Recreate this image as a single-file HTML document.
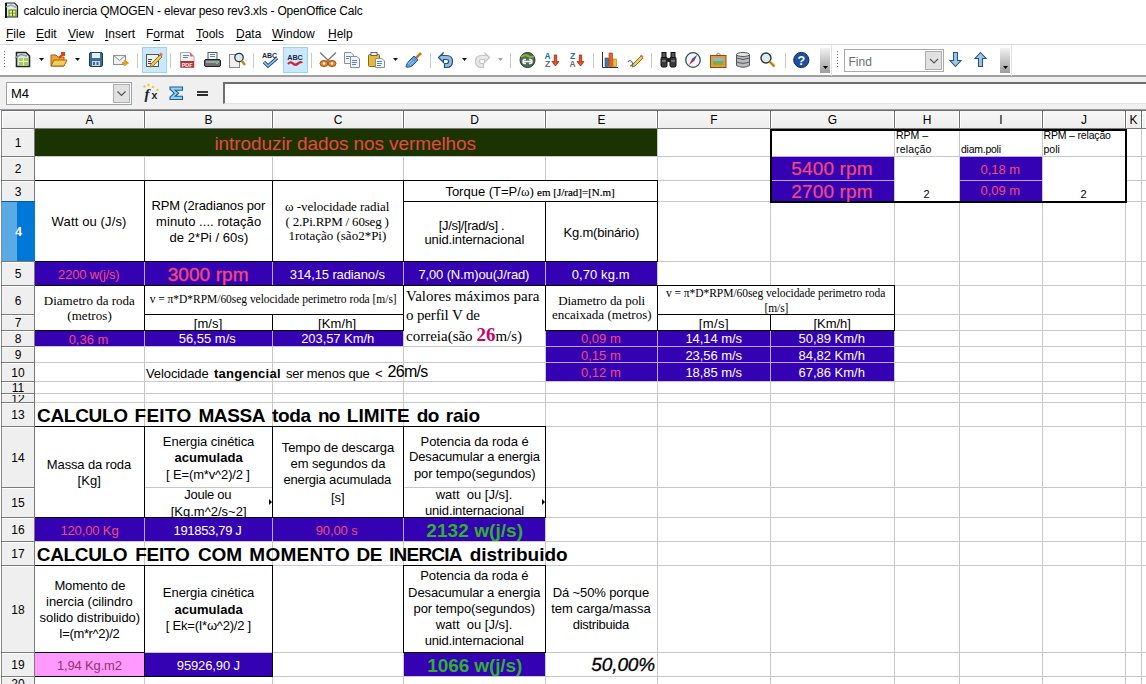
<!DOCTYPE html><html><head><meta charset="utf-8"><style>*{margin:0;padding:0;box-sizing:border-box}
html,body{width:1146px;height:684px;overflow:hidden;background:#fff;font-family:"Liberation Sans",sans-serif;color:#000;position:relative}
.a{position:absolute}
svg{position:absolute;overflow:visible}
#title{left:23.5px;top:4px;font-size:12px;line-height:14px;letter-spacing:-0.17px;white-space:nowrap}
.menu{position:absolute;top:27px;font-size:12px;line-height:14px;white-space:nowrap}
.menu u{text-decoration:underline;text-underline-offset:2px}
.sep{position:absolute;top:52px;width:1px;height:20px;background:#c8c8c8}
.dd{position:absolute;top:59px;width:0;height:0;border-left:3px solid transparent;border-right:3px solid transparent;border-top:3px solid #111}
.hl{position:absolute;background:#cce4f7;border:1px solid #99c9ef}
.gh{position:absolute;background:#c8c8c8}
.ch{position:absolute;top:111px;height:17px;background:linear-gradient(#f7f7f7,#ededed);border-left:1px solid #fff;border-right:1px solid #fff;font-size:12px;line-height:19px;text-align:center}
.rh{position:absolute;left:2px;width:32px;background:#efefef;font-size:12px;display:flex;align-items:center;justify-content:center;overflow:hidden;border-top:1px solid #fff}
.rh.sel{background:linear-gradient(90deg,#5aaae8 0,#5aaae8 15px,#0078d7 15px);color:#fff;font-weight:bold;border-top:1px solid #0a5a94}
.c{position:absolute;display:flex;align-items:center;justify-content:center;text-align:center;overflow:hidden;font-size:13px;line-height:15px;white-space:nowrap}
.pu{background:#3300a0}
.red{color:#ff3366}
.wh{color:#fff}
.ser{font-family:"Liberation Serif",serif}
</style></head><body>
<svg style="left:5px;top:2px" width="14" height="16" viewBox="0 0 14 16">
<path d="M1 1H9.5L12.5 4V15H1Z" fill="#e4ecea" stroke="#1a2424" stroke-width="1.2"/>
<rect x="0" y="1" width="2" height="15" fill="#101818"/>
<rect x="3.5" y="7.5" width="8" height="7" fill="#587a1a"/>
<rect x="4.5" y="8.5" width="2.5" height="2.3" fill="#e4f47a"/><rect x="8" y="8.5" width="2.5" height="2.3" fill="#e4f47a"/>
<rect x="4.5" y="11.5" width="2.5" height="2.3" fill="#e4f47a"/><rect x="8" y="11.5" width="2.5" height="2.3" fill="#e4f47a"/>
<path d="M1 5L6 3L11.5 5.5" stroke="#9aa8a8" stroke-width="1.6" fill="none"/>
</svg>
<div id="title" class="a">calculo inercia QMOGEN - elevar peso rev3.xls - OpenOffice Calc</div>
<div class="menu" style="left:6px"><u>F</u>ile</div>
<div class="menu" style="left:36px"><u>E</u>dit</div>
<div class="menu" style="left:68px"><u>V</u>iew</div>
<div class="menu" style="left:105px"><u>I</u>nsert</div>
<div class="menu" style="left:146px">F<u>o</u>rmat</div>
<div class="menu" style="left:196px"><u>T</u>ools</div>
<div class="menu" style="left:236px"><u>D</u>ata</div>
<div class="menu" style="left:272px"><u>W</u>indow</div>
<div class="menu" style="left:328px"><u>H</u>elp</div>
<div class="a" style="left:0;top:44px;width:1146px;height:1px;background:#dadada"></div>
<div class="a" style="left:0;top:75px;width:1146px;height:2px;background:#a0a0a0"></div>
<div class="a" style="left:0;top:77px;width:1146px;height:33px;background:#f0f0f0"></div>
<div class="a" style="left:6px;top:82px;width:126px;height:23px;background:#fff;border:1px solid #a0a0a0"></div>
<div class="a" style="left:11px;top:86px;font-size:13px;line-height:15px">M4</div>
<div class="a" style="left:113px;top:84px;width:17px;height:19px;background:#e1e1e1;border:1px solid #adadad"></div>
<svg style="left:116px;top:90px" width="11" height="7"><path d="M1.5 1.5l4 4 4-4" stroke="#555" fill="none" stroke-width="1.2"/></svg>
<div class="a" style="left:223px;top:82px;width:923px;height:22px;background:#fff;border-top:2px solid #6e6e6e;border-left:2px solid #6e6e6e;border-bottom:1px solid #e3e3e3"></div>
<div class="a" style="left:0;top:109px;width:1146px;height:1px;background:#9a9a9a"></div>
<div class="a" style="left:1px;top:110px;width:1145px;height:1px;background:#6f6f6f"></div>
<div class="a" style="left:1px;top:110px;width:1px;height:574px;background:#8a8a8a"></div>

<div class="a" style="left:4px;top:51px;width:1px;height:1px;background:#777"></div>
<div class="a" style="left:4px;top:54px;width:1px;height:1px;background:#777"></div>
<div class="a" style="left:4px;top:57px;width:1px;height:1px;background:#777"></div>
<div class="a" style="left:4px;top:60px;width:1px;height:1px;background:#777"></div>
<div class="a" style="left:4px;top:63px;width:1px;height:1px;background:#777"></div>
<div class="a" style="left:4px;top:66px;width:1px;height:1px;background:#777"></div>
<svg style="left:15px;top:51px" width="16" height="17" viewBox="0 0 16 17"><path d="M1.5 1.5H11L14.5 5V15.5H1.5Z" fill="#dfe6e6" stroke="#1c2828" stroke-width="1.6"/><rect x="4" y="7" width="9" height="7.5" fill="#a8cc58"/><path d="M4 10.5H13M8.5 7V14.5" stroke="#eaf4d0" stroke-width="1"/><path d="M0 7L6 3.5L12 5" stroke="#8a9a9a" stroke-width="1.6" fill="none"/></svg>
<svg style="left:39px;top:58px" width="6" height="3" viewBox="0 0 6 3"><path d="M0 0H5L2.5 3Z" fill="#111"/></svg>
<svg style="left:50px;top:51px" width="18" height="17" viewBox="0 0 18 17"><path d="M1 4H6L8 6H14V15H1Z" fill="#e8a53a" stroke="#a06010" stroke-width="1"/><path d="M1 15L4 9H17L14 15Z" fill="#f7cc5a" stroke="#a06010" stroke-width="1"/><path d="M9 7L14 2M11 2H14V5" stroke="#e04020" stroke-width="2.2" fill="none"/></svg>
<svg style="left:75px;top:58px" width="6" height="3" viewBox="0 0 6 3"><path d="M0 0H5L2.5 3Z" fill="#111"/></svg>
<svg style="left:89px;top:52px" width="15" height="15" viewBox="0 0 15 15"><rect x="0.5" y="0.5" width="13" height="14" rx="1.5" fill="#3c6e94" stroke="#1f3a52"/><rect x="3" y="1" width="8" height="5" fill="#e6eef5"/><rect x="3" y="9" width="8" height="5" fill="#c8d6e2"/><rect x="4" y="10" width="2" height="3" fill="#3c6e94"/><rect x="7.5" y="10" width="2" height="3" fill="#3c6e94"/></svg>
<svg style="left:113px;top:55px" width="17" height="12" viewBox="0 0 17 12"><rect x="0.5" y="0.5" width="12" height="9" fill="#eef0f2" stroke="#8a9098"/><path d="M0.5 0.5L6.5 5.5L12.5 0.5" stroke="#8a9098" fill="none"/><path d="M9 8H13M11 5.5L14.5 8L11 10.5" stroke="#e89a20" stroke-width="2" fill="none"/></svg>
<div class="a" style="left:137px;top:53px;width:1px;height:15px;background:#c9c9c9"></div>
<div class="a" style="left:142px;top:47px;width:25px;height:26px;background:#cce8ff;border:1px solid #99d1ff"></div>
<svg style="left:146px;top:52px" width="17" height="15" viewBox="0 0 17 15"><rect x="0.5" y="2.5" width="12" height="12" fill="#eef0f0" stroke="#555"/><path d="M2 7.5H6M2 9.5H5M2 11.5H5" stroke="#444"/><path d="M5 12L14 3L16 5L7 14L4 15Z" fill="#f5c842" stroke="#7a5a10" stroke-width="0.8"/><path d="M13 2L15 0.5L17 2.5L15.5 4.5Z" fill="#e07080"/></svg>
<div class="a" style="left:170px;top:53px;width:1px;height:15px;background:#c9c9c9"></div>
<svg style="left:180px;top:52px" width="15" height="16" viewBox="0 0 15 16"><path d="M0.5 0.5H10L14 4.5V15.5H0.5Z" fill="#f4f4f4" stroke="#aaa"/><path d="M3 3.5H9M3 5.5H8" stroke="#5588bb"/><path d="M10 0.5V4.5H14" fill="#e06060"/><rect x="0.5" y="9" width="13.5" height="6.5" fill="#c42a2a"/><text x="7.2" y="14.5" font-size="5.5" font-family="Liberation Sans" font-weight="bold" fill="#fff" text-anchor="middle">PDF</text></svg>
<svg style="left:204px;top:52px" width="17" height="15" viewBox="0 0 17 15"><rect x="4" y="0.5" width="9" height="7" fill="#f4f6f8" stroke="#557"/><path d="M6 2.5H11M6 4.5H11" stroke="#5588bb"/><rect x="0.5" y="7.5" width="16" height="7" rx="1.5" fill="#6e7070" stroke="#222"/><rect x="2" y="9" width="13" height="2" fill="#9aa"/><rect x="12" y="11" width="2" height="1" fill="#7c4"/></svg>
<svg style="left:229px;top:52px" width="17" height="16" viewBox="0 0 17 16"><rect x="0.5" y="2.5" width="10" height="13" fill="#eef0f2" stroke="#888"/><circle cx="10" cy="5.5" r="4.2" fill="#d8ecf8" stroke="#333" stroke-width="1.3"/><path d="M12.5 8.5L16 13" stroke="#b88a20" stroke-width="2.4"/></svg>
<div class="a" style="left:253px;top:53px;width:1px;height:15px;background:#c9c9c9"></div>
<svg style="left:261px;top:52px" width="18" height="16" viewBox="0 0 18 16"><text x="8.5" y="6" font-size="7" font-family="Liberation Sans" font-weight="bold" fill="#1a2a40" text-anchor="middle">ABC</text><path d="M3 10L7 14L16 6" stroke="#1a4a80" stroke-width="3.4" fill="none"/><path d="M3 10L7 14L16 6" stroke="#8cc8f0" stroke-width="1.6" fill="none"/></svg>
<div class="a" style="left:283px;top:47px;width:25px;height:26px;background:#cce8ff;border:1px solid #99d1ff"></div>
<svg style="left:287px;top:53px" width="16" height="14" viewBox="0 0 16 14"><text x="8" y="6.5" font-size="7.2" font-family="Liberation Sans" font-weight="bold" fill="#1a2a40" text-anchor="middle">ABC</text><path d="M1 11Q4 8 6 10.5T11 10.5T15 10" stroke="#cc2a2a" stroke-width="2.4" fill="none"/></svg>
<div class="a" style="left:311px;top:53px;width:1px;height:15px;background:#c9c9c9"></div>
<svg style="left:319px;top:52px" width="18" height="15" viewBox="0 0 18 15"><path d="M1 0.5L11 10M17 0.5L7 10" stroke="#7a7a7a" stroke-width="1.3"/><ellipse cx="5" cy="11.5" rx="4" ry="3" fill="#e8852a" stroke="#a04a10"/><ellipse cx="13" cy="11.5" rx="4" ry="3" fill="#e8852a" stroke="#a04a10"/><circle cx="5" cy="11.5" r="1.2" fill="#fff"/><circle cx="13" cy="11.5" r="1.2" fill="#fff"/></svg>
<svg style="left:344px;top:52px" width="17" height="16" viewBox="0 0 17 16"><path d="M0.5 0.5H7L9.5 3V11.5H0.5Z" fill="#f2f4f6" stroke="#8a8f96"/><path d="M2 4.5H7M2 6.5H5" stroke="#5588bb"/><path d="M6.5 4.5H13L15.5 7V15.5H6.5Z" fill="#f2f4f6" stroke="#8a8f96"/><path d="M8 8.5H13M8 10.5H13M8 12.5H12" stroke="#5588bb"/></svg>
<svg style="left:368px;top:52px" width="18" height="16" viewBox="0 0 18 16"><rect x="0.5" y="2.5" width="11" height="12" rx="1" fill="#e8b83a" stroke="#8a6a10"/><rect x="3" y="0.5" width="6" height="3" fill="#f4f4f4" stroke="#666"/><path d="M7.5 6.5H14L16.5 9V15.5H7.5Z" fill="#f2f4f6" stroke="#8a8f96"/><path d="M9 9.5H14M9 11.5H14M9 13.5H13" stroke="#5588bb"/></svg>
<svg style="left:393px;top:58px" width="6" height="3" viewBox="0 0 6 3"><path d="M0 0H5L2.5 3Z" fill="#111"/></svg>
<svg style="left:405px;top:52px" width="18" height="16" viewBox="0 0 18 16"><path d="M11 6L16 1" stroke="#c0801a" stroke-width="2.5"/><path d="M9 4L13 8L7 14Q3 16 1 15Q1 12 4 9Z" fill="#5d9be0" stroke="#2a5a90" stroke-width="1"/><path d="M3 12L7 8M5 13L9 9" stroke="#b8d8f8" stroke-width="0.8"/></svg>
<div class="a" style="left:430px;top:53px;width:1px;height:15px;background:#c9c9c9"></div>
<svg style="left:437px;top:52px" width="18" height="16" viewBox="0 0 18 16"><path d="M4 3H9Q15 3 15 9Q15 15 9 15H7V11H9Q11 11 11 9Q11 7 9 7H6V10L1 5L6 0Z" fill="#8fbde8" stroke="#2c4e78" stroke-width="1.2" transform="translate(0.5,0.5)"/></svg>
<svg style="left:462px;top:58px" width="6" height="3" viewBox="0 0 6 3"><path d="M0 0H5L2.5 3Z" fill="#111"/></svg>
<svg style="left:474px;top:52px" width="17" height="16" viewBox="0 0 17 16"><path d="M12 3H7Q1 3 1 9Q1 15 7 15H9V11H7Q5 11 5 9Q5 7 7 7H10V10L15 5L10 0Z" fill="#e8e8e8" stroke="#c4c4c4" stroke-width="1.2" transform="translate(0.5,0.5)"/></svg>
<svg style="left:498px;top:58px" width="6" height="3" viewBox="0 0 6 3"><path d="M0 0H5L2.5 3Z" fill="#a8a8a8"/></svg>
<div class="a" style="left:510px;top:53px;width:1px;height:15px;background:#c9c9c9"></div>
<svg style="left:519px;top:52px" width="17" height="16" viewBox="0 0 17 16"><circle cx="8.5" cy="8" r="7.5" fill="#4a7050" stroke="#203830"/><path d="M2 5Q6 2 9 4T15 4" stroke="#8ab040" stroke-width="2" fill="none"/><path d="M4 9.5H13M4 9.5Q4 7.5 6 7.5H7M4 9.5Q4 11.5 6 11.5H7M13 9.5Q13 7.5 11 7.5H10M13 9.5Q13 11.5 11 11.5H10" stroke="#fff" stroke-width="1.4" fill="none"/></svg>
<svg style="left:544px;top:52px" width="16" height="16" viewBox="0 0 16 16"><text x="3.5" y="6.5" font-size="8.5" font-family="Liberation Sans" font-weight="bold" fill="#1a6ab8" text-anchor="middle">A</text><text x="3.5" y="15" font-size="8.5" font-family="Liberation Sans" font-weight="bold" fill="#6a6a6a" text-anchor="middle">Z</text><path d="M10.3 3H12.7V9.5H15L11.5 14L8 9.5H10.3Z" fill="#e8502a" stroke="#a02a10" stroke-width="0.8"/></svg>
<svg style="left:569px;top:52px" width="16" height="16" viewBox="0 0 16 16"><text x="3.5" y="6.5" font-size="8.5" font-family="Liberation Sans" font-weight="bold" fill="#1a6ab8" text-anchor="middle">Z</text><text x="3.5" y="15" font-size="8.5" font-family="Liberation Sans" font-weight="bold" fill="#6a6a6a" text-anchor="middle">A</text><path d="M10.3 3H12.7V9.5H15L11.5 14L8 9.5H10.3Z" fill="#e8502a" stroke="#a02a10" stroke-width="0.8"/></svg>
<div class="a" style="left:593px;top:53px;width:1px;height:15px;background:#c9c9c9"></div>
<svg style="left:602px;top:52px" width="17" height="16" viewBox="0 0 17 16"><path d="M0.5 0V15.5H16" stroke="#333" fill="none"/><rect x="3" y="6" width="3.5" height="8.5" fill="#4a78a8" stroke="#2a4a70" stroke-width="0.6"/><rect x="7" y="1" width="3.5" height="13.5" fill="#e8602a" stroke="#a03a10" stroke-width="0.6"/><rect x="11" y="7" width="3.5" height="7.5" fill="#f4c040" stroke="#a07a10" stroke-width="0.6"/></svg>
<svg style="left:627px;top:54px" width="17" height="13" viewBox="0 0 17 13"><path d="M1 8Q3 5 5 8T3 12Q6 11 7 9" stroke="#3a6ad0" stroke-width="1.2" fill="none"/><path d="M6 10L14 2L16 4L8 12L5 13Z" fill="#f5c842" stroke="#7a5a10" stroke-width="0.8"/><path d="M13 1.5L14.5 0.5L16.5 2.5L15.5 4Z" fill="#e07080"/></svg>
<div class="a" style="left:651px;top:53px;width:1px;height:15px;background:#c9c9c9"></div>
<svg style="left:660px;top:52px" width="17" height="15" viewBox="0 0 17 15"><rect x="1" y="5" width="6" height="10" rx="1.5" fill="#3a3a3a" stroke="#111"/><rect x="10" y="5" width="6" height="10" rx="1.5" fill="#3a3a3a" stroke="#111"/><rect x="2" y="0.5" width="4" height="5" fill="#555" stroke="#111"/><rect x="11" y="0.5" width="4" height="5" fill="#555" stroke="#111"/><rect x="6" y="6" width="5" height="4" fill="#222"/><path d="M2 9H6M11 9H15" stroke="#aaa"/></svg>
<svg style="left:685px;top:52px" width="16" height="16" viewBox="0 0 16 16"><circle cx="8" cy="8" r="7.3" fill="#f4f6f8" stroke="#3a4a5a" stroke-width="1.3"/><path d="M12 3L9 9L4 13L7 7Z" fill="#d82a2a"/><path d="M12 3L9 9L7 7Z" fill="#2a5ad8"/></svg>
<svg style="left:710px;top:52px" width="17" height="16" viewBox="0 0 17 16"><path d="M6 3.5L8.5 0.8L11 3.5" stroke="#666" fill="none" stroke-width="0.8"/><rect x="0.5" y="3.5" width="15.5" height="12" fill="#e89a3a" stroke="#8a5010"/><rect x="3" y="6" width="10.5" height="7" fill="#7ab040"/><rect x="3" y="6" width="10.5" height="3" fill="#88b8e0"/></svg>
<svg style="left:736px;top:52px" width="14" height="16" viewBox="0 0 14 16"><path d="M0.5 2.5V13.5Q7 17 13.5 13.5V2.5" fill="#b8bcc0" stroke="#555"/><ellipse cx="7" cy="2.5" rx="6.5" ry="2" fill="#e4e6e8" stroke="#555"/><path d="M0.5 6Q7 9 13.5 6M0.5 9.8Q7 12.8 13.5 9.8" stroke="#555" fill="none"/></svg>
<svg style="left:760px;top:52px" width="16" height="16" viewBox="0 0 16 16"><circle cx="6" cy="6" r="5" fill="#d8ecf8" stroke="#333" stroke-width="1.4"/><path d="M9.5 9.5L14.5 14.5" stroke="#c8a030" stroke-width="2.8"/><path d="M9.5 9.5L14.5 14.5" stroke="#6a5010" stroke-width="0.6"/></svg>
<div class="a" style="left:785px;top:53px;width:1px;height:15px;background:#c9c9c9"></div>
<svg style="left:793px;top:52px" width="17" height="16" viewBox="0 0 17 16"><circle cx="8.3" cy="8" r="7.6" fill="#1f4fa0" stroke="#0e2a5c"/><text x="8.3" y="12.8" font-size="12.5" font-family="Liberation Sans" font-weight="bold" fill="#fff" text-anchor="middle">?</text></svg>
<div class="a" style="left:820px;top:48px;width:10px;height:25px;background:linear-gradient(#f2f2f2,#9c9c9c)"></div>
<svg style="left:823px;top:66px" width="5" height="3" viewBox="0 0 5 3"><path d="M0 0H5L2.5 3Z" fill="#000"/></svg>
<div class="a" style="left:831px;top:44px;width:1px;height:32px;background:#e2e2e2"></div>
<div class="a" style="left:837px;top:51px;width:1px;height:1px;background:#777"></div>
<div class="a" style="left:837px;top:54px;width:1px;height:1px;background:#777"></div>
<div class="a" style="left:837px;top:57px;width:1px;height:1px;background:#777"></div>
<div class="a" style="left:837px;top:60px;width:1px;height:1px;background:#777"></div>
<div class="a" style="left:837px;top:63px;width:1px;height:1px;background:#777"></div>
<div class="a" style="left:837px;top:66px;width:1px;height:1px;background:#777"></div>
<div class="a" style="left:844px;top:49px;width:100px;height:23px;background:#fff;border:1px solid #a8a8a8"></div>
<div class="a" style="left:848.5px;top:55px;font-size:12px;line-height:14px;color:#6d6d6d">Find</div>
<div class="a" style="left:925px;top:51px;width:17px;height:19px;background:#e1e1e1;border:1px solid #adadad"></div>
<svg style="left:929px;top:58px" width="10" height="6" viewBox="0 0 10 6"><path d="M1 1L5 5L9 1" stroke="#555" fill="none" stroke-width="1.1"/></svg>
<svg style="left:949px;top:52px" width="13" height="15" viewBox="0 0 13 15"><path d="M4.5 0.5H8.5V8.5H12L6.5 14.5L1 8.5H4.5Z" fill="#9cc8ec" stroke="#2c5080" stroke-width="1.1"/></svg>
<svg style="left:974px;top:52px" width="13" height="15" viewBox="0 0 13 15"><path d="M4.5 14.5H8.5V6.5H12L6.5 0.5L1 6.5H4.5Z" fill="#9cc8ec" stroke="#2c5080" stroke-width="1.1"/></svg>
<div class="a" style="left:1000px;top:48px;width:10px;height:25px;background:linear-gradient(#f2f2f2,#9c9c9c)"></div>
<svg style="left:1003px;top:66px" width="5" height="3" viewBox="0 0 5 3"><path d="M0 0H5L2.5 3Z" fill="#000"/></svg>
<div class="a" style="left:1011px;top:44px;width:1px;height:32px;background:#e2e2e2"></div>
<svg style="left:142px;top:83px" width="20" height="19" viewBox="0 0 20 19"><text x="2.5" y="15.5" font-size="15" font-family="Liberation Serif" font-style="italic" font-weight="bold" fill="#1a2430">f</text><text x="9.5" y="15.5" font-size="10.5" font-family="Liberation Sans" font-weight="bold" fill="#1a2430">x</text><path d="M2.5 2L4 3.5L2.5 5L1 3.5Z M6.5 0.5L8 2L6.5 3.5L5 2Z M11 2.5L12.5 4L11 5.5L9.5 4Z M15.5 5.5L17 7L15.5 8.5L14 7Z" fill="#f4c430"/></svg>
<svg style="left:169px;top:86px" width="15" height="15" viewBox="0 0 15 15"><path d="M1 1H13.5V4.2H6.2L9.6 7.2L6.2 10.3H13.5V13.5H1V11.2L5.2 7.2L1 3.2Z" fill="#8fd2f6" stroke="#1f5a9a" stroke-width="1.1" stroke-linejoin="miter"/></svg>
<div class="a" style="left:197px;top:91px;width:11px;height:2px;background:#3a3a3a"></div>
<div class="a" style="left:197px;top:94px;width:11px;height:2px;background:#2a2a2a"></div>
<div class="ch" style="left:35px;width:109px">A</div>
<div class="ch" style="left:145px;width:127px">B</div>
<div class="ch" style="left:273px;width:130px">C</div>
<div class="ch" style="left:404px;width:141px">D</div>
<div class="ch" style="left:546px;width:111px">E</div>
<div class="ch" style="left:658px;width:112px">F</div>
<div class="ch" style="left:771px;width:123px">G</div>
<div class="ch" style="left:895px;width:64px">H</div>
<div class="ch" style="left:960px;width:82px">I</div>
<div class="ch" style="left:1043px;width:82px">J</div>
<div class="ch" style="left:1126px;width:15px">K</div>
<div class="ch" style="left:1142px;width:4px"></div>
<div class="rh" style="top:129px;height:27px"><span>1</span></div>
<div class="rh" style="top:157px;height:23px"><span>2</span></div>
<div class="rh" style="top:181px;height:20px"><span>3</span></div>
<div class="rh sel" style="top:202px;height:59px"><span>4</span></div>
<div class="rh" style="top:262px;height:23px"><span>5</span></div>
<div class="rh" style="top:286px;height:28px"><span>6</span></div>
<div class="rh" style="top:315px;height:15px"><span>7</span></div>
<div class="rh" style="top:331px;height:15px"><span>8</span></div>
<div class="rh" style="top:347px;height:15px"><span>9</span></div>
<div class="rh" style="top:363px;height:18px"><span>10</span></div>
<div class="rh" style="top:382px;height:11px"><span>11</span></div>
<div class="rh" style="top:394px;height:8px"><span>12</span></div>
<div class="rh" style="top:403px;height:23px"><span>13</span></div>
<div class="rh" style="top:427px;height:60px"><span>14</span></div>
<div class="rh" style="top:488px;height:29px"><span>15</span></div>
<div class="rh" style="top:518px;height:23px"><span>16</span></div>
<div class="rh" style="top:542px;height:23px"><span>17</span></div>
<div class="rh" style="top:566px;height:86px"><span>18</span></div>
<div class="rh" style="top:653px;height:23px"><span>19</span></div>
<div class="rh" style="top:677px;height:13px"><span>20</span></div>
<div class="a" style="left:34px;top:110px;width:1px;height:574px;background:#7a7a7a"></div>
<div class="a" style="left:144px;top:110px;width:1px;height:18px;background:#6f6f6f"></div>
<div class="a" style="left:272px;top:110px;width:1px;height:18px;background:#6f6f6f"></div>
<div class="a" style="left:403px;top:110px;width:1px;height:18px;background:#6f6f6f"></div>
<div class="a" style="left:545px;top:110px;width:1px;height:18px;background:#6f6f6f"></div>
<div class="a" style="left:657px;top:110px;width:1px;height:18px;background:#6f6f6f"></div>
<div class="a" style="left:770px;top:110px;width:1px;height:18px;background:#6f6f6f"></div>
<div class="a" style="left:894px;top:110px;width:1px;height:18px;background:#6f6f6f"></div>
<div class="a" style="left:959px;top:110px;width:1px;height:18px;background:#6f6f6f"></div>
<div class="a" style="left:1042px;top:110px;width:1px;height:18px;background:#6f6f6f"></div>
<div class="a" style="left:1125px;top:110px;width:1px;height:18px;background:#6f6f6f"></div>
<div class="a" style="left:1141px;top:110px;width:1px;height:18px;background:#6f6f6f"></div>
<div class="a" style="left:1px;top:128px;width:1145px;height:1px;background:#7a7a7a"></div>
<div class="a" style="left:1px;top:156px;width:34px;height:1px;background:#7a7a7a"></div>
<div class="a" style="left:1px;top:180px;width:34px;height:1px;background:#7a7a7a"></div>
<div class="a" style="left:1px;top:201px;width:34px;height:1px;background:#7a7a7a"></div>
<div class="a" style="left:1px;top:261px;width:34px;height:1px;background:#7a7a7a"></div>
<div class="a" style="left:1px;top:285px;width:34px;height:1px;background:#7a7a7a"></div>
<div class="a" style="left:1px;top:314px;width:34px;height:1px;background:#7a7a7a"></div>
<div class="a" style="left:1px;top:330px;width:34px;height:1px;background:#7a7a7a"></div>
<div class="a" style="left:1px;top:346px;width:34px;height:1px;background:#7a7a7a"></div>
<div class="a" style="left:1px;top:362px;width:34px;height:1px;background:#7a7a7a"></div>
<div class="a" style="left:1px;top:381px;width:34px;height:1px;background:#7a7a7a"></div>
<div class="a" style="left:1px;top:393px;width:34px;height:1px;background:#7a7a7a"></div>
<div class="a" style="left:1px;top:402px;width:34px;height:1px;background:#7a7a7a"></div>
<div class="a" style="left:1px;top:426px;width:34px;height:1px;background:#7a7a7a"></div>
<div class="a" style="left:1px;top:487px;width:34px;height:1px;background:#7a7a7a"></div>
<div class="a" style="left:1px;top:517px;width:34px;height:1px;background:#7a7a7a"></div>
<div class="a" style="left:1px;top:541px;width:34px;height:1px;background:#7a7a7a"></div>
<div class="a" style="left:1px;top:565px;width:34px;height:1px;background:#7a7a7a"></div>
<div class="a" style="left:1px;top:652px;width:34px;height:1px;background:#7a7a7a"></div>
<div class="a" style="left:1px;top:676px;width:34px;height:1px;background:#7a7a7a"></div>
<div class="gh" style="left:144px;top:129px;width:1px;height:555px"></div>
<div class="gh" style="left:272px;top:129px;width:1px;height:555px"></div>
<div class="gh" style="left:403px;top:129px;width:1px;height:555px"></div>
<div class="gh" style="left:545px;top:129px;width:1px;height:555px"></div>
<div class="gh" style="left:657px;top:129px;width:1px;height:555px"></div>
<div class="gh" style="left:770px;top:129px;width:1px;height:555px"></div>
<div class="gh" style="left:894px;top:129px;width:1px;height:555px"></div>
<div class="gh" style="left:959px;top:129px;width:1px;height:555px"></div>
<div class="gh" style="left:1042px;top:129px;width:1px;height:555px"></div>
<div class="gh" style="left:1125px;top:129px;width:1px;height:555px"></div>
<div class="gh" style="left:1141px;top:129px;width:1px;height:555px"></div>
<div class="gh" style="left:35px;top:156px;width:1111px;height:1px"></div>
<div class="gh" style="left:35px;top:180px;width:1111px;height:1px"></div>
<div class="gh" style="left:35px;top:201px;width:1111px;height:1px"></div>
<div class="gh" style="left:35px;top:261px;width:1111px;height:1px"></div>
<div class="gh" style="left:35px;top:285px;width:1111px;height:1px"></div>
<div class="gh" style="left:35px;top:314px;width:1111px;height:1px"></div>
<div class="gh" style="left:35px;top:330px;width:1111px;height:1px"></div>
<div class="gh" style="left:35px;top:346px;width:1111px;height:1px"></div>
<div class="gh" style="left:35px;top:362px;width:1111px;height:1px"></div>
<div class="gh" style="left:35px;top:381px;width:1111px;height:1px"></div>
<div class="gh" style="left:35px;top:393px;width:1111px;height:1px"></div>
<div class="gh" style="left:35px;top:402px;width:1111px;height:1px"></div>
<div class="gh" style="left:35px;top:426px;width:1111px;height:1px"></div>
<div class="gh" style="left:35px;top:487px;width:1111px;height:1px"></div>
<div class="gh" style="left:35px;top:517px;width:1111px;height:1px"></div>
<div class="gh" style="left:35px;top:541px;width:1111px;height:1px"></div>
<div class="gh" style="left:35px;top:565px;width:1111px;height:1px"></div>
<div class="gh" style="left:35px;top:652px;width:1111px;height:1px"></div>
<div class="gh" style="left:35px;top:676px;width:1111px;height:1px"></div>
<div class="a" style="left:895px;top:157px;width:64px;height:44px;background:#fff"></div>
<div class="a" style="left:1043px;top:157px;width:82px;height:44px;background:#fff"></div>
<div class="a" style="left:35px;top:181px;width:109px;height:80px;background:#fff"></div>
<div class="a" style="left:145px;top:181px;width:127px;height:80px;background:#fff"></div>
<div class="a" style="left:273px;top:181px;width:130px;height:80px;background:#fff"></div>
<div class="a" style="left:404px;top:181px;width:253px;height:20px;background:#fff"></div>
<div class="a" style="left:35px;top:286px;width:109px;height:44px;background:#fff"></div>
<div class="a" style="left:145px;top:286px;width:258px;height:28px;background:#fff"></div>
<div class="a" style="left:404px;top:286px;width:141px;height:60px;background:#fff"></div>
<div class="a" style="left:546px;top:286px;width:111px;height:44px;background:#fff"></div>
<div class="a" style="left:658px;top:286px;width:236px;height:28px;background:#fff"></div>
<div class="a" style="left:35px;top:427px;width:109px;height:90px;background:#fff"></div>
<div class="a" style="left:273px;top:427px;width:130px;height:90px;background:#fff"></div>
<div class="a" style="left:35px;top:129px;width:622px;height:27px;background:#1a3300"></div>
<div class="a" style="left:-154.79px;width:1000px;text-align:center;top:133.92px;font-family:'Liberation Sans',sans-serif;font-size:19px;line-height:19px;color:#e8493f;white-space:nowrap;letter-spacing:-0.086px;">introduzir dados nos vermelhos</div>
<div class="a" style="left:771px;top:157px;width:123px;height:44px;background:#3402b2"></div>
<div class="a" style="left:960px;top:157px;width:82px;height:44px;background:#3402b2"></div>
<div class="a" style="left:771px;top:180px;width:123px;height:1px;background:#bba6fa"></div>
<div class="a" style="left:960px;top:180px;width:82px;height:1px;background:#bba6fa"></div>
<div class="a" style="left:771px;top:156px;width:123px;height:1px;background:#bba6fa"></div>
<div class="a" style="left:960px;top:156px;width:82px;height:1px;background:#bba6fa"></div>
<div class="a" style="left:770px;top:129px;width:357px;height:2px;background:#000"></div>
<div class="a" style="left:770px;top:201px;width:357px;height:2px;background:#000"></div>
<div class="a" style="left:770px;top:129px;width:2px;height:74px;background:#000"></div>
<div class="a" style="left:1125px;top:129px;width:2px;height:74px;background:#000"></div>
<div class="a" style="left:332.07px;width:1000px;text-align:center;top:159.42px;font-family:'Liberation Sans',sans-serif;font-size:19px;line-height:19px;color:#f54a78;white-space:nowrap;letter-spacing:0.143px;-webkit-text-stroke:0.2px;">5400 rpm</div>
<div class="a" style="left:332.07px;width:1000px;text-align:center;top:182.42px;font-family:'Liberation Sans',sans-serif;font-size:19px;line-height:19px;color:#f54a78;white-space:nowrap;letter-spacing:0.143px;-webkit-text-stroke:0.2px;">2700 rpm</div>
<div class="a" style="left:896.00px;top:130.11px;font-family:'Liberation Sans',sans-serif;font-size:10.5px;line-height:10.5px;color:#000;white-space:nowrap;">RPM –</div>
<div class="a" style="left:896.00px;top:144.11px;font-family:'Liberation Sans',sans-serif;font-size:10.5px;line-height:10.5px;color:#000;white-space:nowrap;letter-spacing:0.158px;">relação</div>
<div class="a" style="left:961.00px;top:144.11px;font-family:'Liberation Sans',sans-serif;font-size:10.5px;line-height:10.5px;color:#000;white-space:nowrap;letter-spacing:-0.250px;">diam.poli</div>
<div class="a" style="left:1043.50px;top:130.11px;font-family:'Liberation Sans',sans-serif;font-size:10.5px;line-height:10.5px;color:#000;white-space:nowrap;letter-spacing:-0.171px;">RPM – relação</div>
<div class="a" style="left:1043.50px;top:143.61px;font-family:'Liberation Sans',sans-serif;font-size:10.5px;line-height:10.5px;color:#000;white-space:nowrap;">poli</div>
<div class="a" style="left:426.50px;width:1000px;text-align:center;top:188.69px;font-family:'Liberation Sans',sans-serif;font-size:11px;line-height:11px;color:#000;white-space:nowrap;">2</div>
<div class="a" style="left:583.50px;width:1000px;text-align:center;top:188.69px;font-family:'Liberation Sans',sans-serif;font-size:11px;line-height:11px;color:#000;white-space:nowrap;">2</div>
<div class="a" style="left:500.30px;width:1000px;text-align:center;top:162.50px;font-family:'Liberation Sans',sans-serif;font-size:13px;line-height:13px;color:#f54a78;white-space:nowrap;">0,18 m</div>
<div class="a" style="left:500.30px;width:1000px;text-align:center;top:184.00px;font-family:'Liberation Sans',sans-serif;font-size:13px;line-height:13px;color:#f54a78;white-space:nowrap;">0,09 m</div>
<div class="a" style="left:144px;top:180px;width:129px;height:1px;background:#000"></div>
<div class="a" style="left:144px;top:261px;width:129px;height:1px;background:#000"></div>
<div class="a" style="left:144px;top:180px;width:1px;height:82px;background:#000"></div>
<div class="a" style="left:272px;top:180px;width:1px;height:82px;background:#000"></div>
<div class="a" style="left:272px;top:180px;width:132px;height:1px;background:#000"></div>
<div class="a" style="left:272px;top:261px;width:132px;height:1px;background:#000"></div>
<div class="a" style="left:272px;top:180px;width:1px;height:82px;background:#000"></div>
<div class="a" style="left:403px;top:180px;width:1px;height:82px;background:#000"></div>
<div class="a" style="left:403px;top:180px;width:255px;height:1px;background:#000"></div>
<div class="a" style="left:403px;top:261px;width:255px;height:1px;background:#000"></div>
<div class="a" style="left:403px;top:180px;width:1px;height:82px;background:#000"></div>
<div class="a" style="left:657px;top:180px;width:1px;height:82px;background:#000"></div>
<div class="a" style="left:35px;top:180px;width:109px;height:1px;background:#000"></div>
<div class="a" style="left:403px;top:201px;width:254px;height:1px;background:#000"></div>
<div class="a" style="left:545px;top:201px;width:1px;height:60px;background:#000"></div>
<div class="a" style="left:-410.93px;width:1000px;text-align:center;top:215.00px;font-family:'Liberation Sans',sans-serif;font-size:13px;line-height:13px;color:#000;white-space:nowrap;letter-spacing:0.133px;">Watt ou (J/s)</div>
<div class="a" style="left:-291.77px;width:1000px;text-align:center;top:199.00px;font-family:'Liberation Sans',sans-serif;font-size:13px;line-height:13px;color:#000;white-space:nowrap;letter-spacing:-0.147px;">RPM (2radianos por</div>
<div class="a" style="left:-291.37px;width:1000px;text-align:center;top:215.00px;font-family:'Liberation Sans',sans-serif;font-size:13px;line-height:13px;color:#000;white-space:nowrap;letter-spacing:0.056px;">minuto .... rotação</div>
<div class="a" style="left:-291.08px;width:1000px;text-align:center;top:230.50px;font-family:'Liberation Sans',sans-serif;font-size:13px;line-height:13px;color:#000;white-space:nowrap;letter-spacing:0.046px;">de 2*Pi / 60s)</div>
<div class="a" style="left:-162.83px;width:1000px;text-align:center;top:199.61px;font-family:'Liberation Serif',serif;font-size:13px;line-height:13px;color:#000;white-space:nowrap;letter-spacing:-0.053px;">ω -velocidade radial</div>
<div class="a" style="left:-162.89px;width:1000px;text-align:center;top:214.81px;font-family:'Liberation Serif',serif;font-size:13px;line-height:13px;color:#000;white-space:nowrap;letter-spacing:-0.184px;">( 2.Pi.RPM / 60seg )</div>
<div class="a" style="left:-162.60px;width:1000px;text-align:center;top:229.21px;font-family:'Liberation Serif',serif;font-size:13px;line-height:13px;color:#000;white-space:nowrap;">1rotação (são2*Pi)</div>
<div class="a" style="left:445.40px;top:185.00px;font-family:'Liberation Sans',sans-serif;font-size:13px;line-height:13px;color:#000;white-space:nowrap;">Torque (T=P/<span style="font-family:'Liberation Serif',serif">ω) <span style="font-size:11px;-webkit-text-stroke:0.2px">em [J/rad]=[N.m]</span></span></div>
<div class="a" style="left:-28.48px;width:1000px;text-align:center;top:218.50px;font-family:'Liberation Sans',sans-serif;font-size:13px;line-height:13px;color:#000;white-space:nowrap;letter-spacing:-0.357px;">[J/s]/[rad/s] .</div>
<div class="a" style="left:-25.66px;width:1000px;text-align:center;top:233.20px;font-family:'Liberation Sans',sans-serif;font-size:13px;line-height:13px;color:#000;white-space:nowrap;letter-spacing:-0.118px;">unid.internacional</div>
<div class="a" style="left:101.32px;width:1000px;text-align:center;top:225.70px;font-family:'Liberation Sans',sans-serif;font-size:13px;line-height:13px;color:#000;white-space:nowrap;letter-spacing:-0.167px;">Kg.m(binário)</div>
<div class="a" style="left:35px;top:262px;width:622px;height:23px;background:#3402b2"></div>
<div class="a" style="left:35px;top:261px;width:622px;height:1px;background:#000"></div>
<div class="a" style="left:35px;top:285px;width:622px;height:1px;background:#000"></div>
<div class="a" style="left:144px;top:262px;width:1px;height:23px;background:#bba6fa"></div>
<div class="a" style="left:272px;top:262px;width:1px;height:23px;background:#bba6fa"></div>
<div class="a" style="left:403px;top:262px;width:1px;height:23px;background:#bba6fa"></div>
<div class="a" style="left:545px;top:262px;width:1px;height:23px;background:#bba6fa"></div>
<div class="a" style="left:-411.20px;width:1000px;text-align:center;top:267.60px;font-family:'Liberation Sans',sans-serif;font-size:13px;line-height:13px;color:#f54a78;white-space:nowrap;letter-spacing:-0.200px;">2200 w(j/s)</div>
<div class="a" style="left:-291.86px;width:1000px;text-align:center;top:264.92px;font-family:'Liberation Sans',sans-serif;font-size:19px;line-height:19px;color:#f54a78;white-space:nowrap;letter-spacing:0.086px;-webkit-text-stroke:0.35px;">3000 rpm</div>
<div class="a" style="left:-162.66px;width:1000px;text-align:center;top:267.80px;font-family:'Liberation Sans',sans-serif;font-size:13px;line-height:13px;color:#fff;white-space:nowrap;letter-spacing:-0.113px;">314,15 radiano/s</div>
<div class="a" style="left:-26.17px;width:1000px;text-align:center;top:267.80px;font-family:'Liberation Sans',sans-serif;font-size:13px;line-height:13px;color:#fff;white-space:nowrap;letter-spacing:-0.133px;">7,00 (N.m)ou(J/rad)</div>
<div class="a" style="left:100.65px;width:1000px;text-align:center;top:267.80px;font-family:'Liberation Sans',sans-serif;font-size:13px;line-height:13px;color:#fff;white-space:nowrap;letter-spacing:0.100px;">0,70 kg.m</div>
<div class="a" style="left:144px;top:285px;width:260px;height:1px;background:#000"></div>
<div class="a" style="left:144px;top:314px;width:260px;height:1px;background:#000"></div>
<div class="a" style="left:144px;top:285px;width:1px;height:30px;background:#000"></div>
<div class="a" style="left:403px;top:285px;width:1px;height:30px;background:#000"></div>
<div class="a" style="left:144px;top:314px;width:129px;height:1px;background:#000"></div>
<div class="a" style="left:144px;top:330px;width:129px;height:1px;background:#000"></div>
<div class="a" style="left:144px;top:314px;width:1px;height:17px;background:#000"></div>
<div class="a" style="left:272px;top:314px;width:1px;height:17px;background:#000"></div>
<div class="a" style="left:272px;top:314px;width:132px;height:1px;background:#000"></div>
<div class="a" style="left:272px;top:330px;width:132px;height:1px;background:#000"></div>
<div class="a" style="left:272px;top:314px;width:1px;height:17px;background:#000"></div>
<div class="a" style="left:403px;top:314px;width:1px;height:17px;background:#000"></div>
<div class="a" style="left:144px;top:285px;width:1px;height:46px;background:#000"></div>
<div class="a" style="left:35px;top:330px;width:109px;height:1px;background:#000"></div>
<div class="a" style="left:403px;top:285px;width:1px;height:46px;background:#000"></div>
<div class="a" style="left:-410.70px;width:1000px;text-align:center;top:293.71px;font-family:'Liberation Serif',serif;font-size:13px;line-height:13px;color:#000;white-space:nowrap;">Diametro da roda</div>
<div class="a" style="left:-410.46px;width:1000px;text-align:center;top:309.11px;font-family:'Liberation Serif',serif;font-size:13px;line-height:13px;color:#000;white-space:nowrap;letter-spacing:0.071px;">(metros)</div>
<div class="a" style="left:-226.82px;width:1000px;text-align:center;top:294.37px;font-family:'Liberation Serif',serif;font-size:11.5px;line-height:11.5px;color:#000;white-space:nowrap;letter-spacing:-0.036px;">v = π*D*RPM/60seg velocidade perimetro roda [m/s]</div>
<div class="a" style="left:145px;top:315px;width:127px;height:15px;overflow:hidden">
<div class="a" style="left:-436.94px;width:1000px;text-align:center;top:1.50px;font-family:'Liberation Sans',sans-serif;font-size:13px;line-height:13px;color:#000;white-space:nowrap;letter-spacing:0.125px;">[m/s]</div>
</div>
<div class="a" style="left:273px;top:315px;width:130px;height:15px;overflow:hidden">
<div class="a" style="left:-435.86px;width:1000px;text-align:center;top:1.50px;font-family:'Liberation Sans',sans-serif;font-size:13px;line-height:13px;color:#000;white-space:nowrap;letter-spacing:0.080px;">[Km/h]</div>
</div>
<div class="a" style="left:35px;top:331px;width:368px;height:15px;background:#3402b2"></div>
<div class="a" style="left:35px;top:330px;width:368px;height:1px;background:#000"></div>
<div class="a" style="left:144px;top:331px;width:1px;height:15px;background:#bba6fa"></div>
<div class="a" style="left:272px;top:331px;width:1px;height:15px;background:#bba6fa"></div>
<div class="a" style="left:-411.50px;width:1000px;text-align:center;top:332.50px;font-family:'Liberation Sans',sans-serif;font-size:13px;line-height:13px;color:#f54a78;white-space:nowrap;">0,36 m</div>
<div class="a" style="left:-292.80px;width:1000px;text-align:center;top:332.00px;font-family:'Liberation Sans',sans-serif;font-size:13px;line-height:13px;color:#fff;white-space:nowrap;">56,55 m/s</div>
<div class="a" style="left:-162.33px;width:1000px;text-align:center;top:331.80px;font-family:'Liberation Sans',sans-serif;font-size:13px;line-height:13px;color:#fff;white-space:nowrap;letter-spacing:-0.060px;">203,57 Km/h</div>
<div class="a" style="left:406.00px;top:289.04px;font-family:'Liberation Serif',serif;font-size:15px;line-height:15px;color:#000;white-space:nowrap;">Valores máximos para</div>
<div class="a" style="left:406.00px;top:307.94px;font-family:'Liberation Serif',serif;font-size:15px;line-height:15px;color:#000;white-space:nowrap;letter-spacing:-0.142px;">o perfil V de</div>
<div class="a" style="left:406.00px;top:327.44px;font-family:'Liberation Serif',serif;font-size:15px;line-height:15px;color:#000;white-space:nowrap;">correia(são <span style="color:#cc0066;font-size:19px;font-weight:bold">26</span>m/s)</div>
<div class="a" style="left:545px;top:285px;width:113px;height:1px;background:#000"></div>
<div class="a" style="left:545px;top:330px;width:113px;height:1px;background:#000"></div>
<div class="a" style="left:545px;top:285px;width:1px;height:46px;background:#000"></div>
<div class="a" style="left:657px;top:285px;width:1px;height:46px;background:#000"></div>
<div class="a" style="left:657px;top:285px;width:238px;height:1px;background:#000"></div>
<div class="a" style="left:657px;top:314px;width:238px;height:1px;background:#000"></div>
<div class="a" style="left:657px;top:285px;width:1px;height:30px;background:#000"></div>
<div class="a" style="left:894px;top:285px;width:1px;height:30px;background:#000"></div>
<div class="a" style="left:657px;top:314px;width:114px;height:1px;background:#000"></div>
<div class="a" style="left:657px;top:330px;width:114px;height:1px;background:#000"></div>
<div class="a" style="left:657px;top:314px;width:1px;height:17px;background:#000"></div>
<div class="a" style="left:770px;top:314px;width:1px;height:17px;background:#000"></div>
<div class="a" style="left:770px;top:314px;width:125px;height:1px;background:#000"></div>
<div class="a" style="left:770px;top:330px;width:125px;height:1px;background:#000"></div>
<div class="a" style="left:770px;top:314px;width:1px;height:17px;background:#000"></div>
<div class="a" style="left:894px;top:314px;width:1px;height:17px;background:#000"></div>
<div class="a" style="left:101.67px;width:1000px;text-align:center;top:294.21px;font-family:'Liberation Serif',serif;font-size:13px;line-height:13px;color:#000;white-space:nowrap;letter-spacing:-0.067px;">Diametro da poli</div>
<div class="a" style="left:101.81px;width:1000px;text-align:center;top:308.41px;font-family:'Liberation Serif',serif;font-size:13px;line-height:13px;color:#000;white-space:nowrap;letter-spacing:0.029px;">encaixada (metros)</div>
<div class="a" style="left:275.67px;width:1000px;text-align:center;top:287.87px;font-family:'Liberation Serif',serif;font-size:11.5px;line-height:11.5px;color:#000;white-space:nowrap;letter-spacing:-0.056px;">v = π*D*RPM/60seg velocidade perimetro roda</div>
<div class="a" style="left:658px;top:286px;width:236px;height:28px;overflow:hidden">
<div class="a" style="left:-381.64px;width:1000px;text-align:center;top:16.87px;font-family:'Liberation Serif',serif;font-size:11.5px;line-height:11.5px;color:#000;white-space:nowrap;letter-spacing:-0.090px;">[m/s]</div>
</div>
<div class="a" style="left:658px;top:315px;width:112px;height:15px;overflow:hidden">
<div class="a" style="left:-444.17px;width:1000px;text-align:center;top:1.50px;font-family:'Liberation Sans',sans-serif;font-size:13px;line-height:13px;color:#000;white-space:nowrap;letter-spacing:0.450px;">[m/s]</div>
</div>
<div class="a" style="left:771px;top:315px;width:123px;height:15px;overflow:hidden">
<div class="a" style="left:-438.83px;width:1000px;text-align:center;top:1.50px;font-family:'Liberation Sans',sans-serif;font-size:13px;line-height:13px;color:#000;white-space:nowrap;letter-spacing:-0.060px;">[Km/h]</div>
</div>
<div class="a" style="left:546px;top:331px;width:348px;height:50px;background:#3402b2"></div>
<div class="a" style="left:545px;top:330px;width:350px;height:1px;background:#000"></div>
<div class="a" style="left:546px;top:346px;width:348px;height:1px;background:#bba6fa"></div>
<div class="a" style="left:546px;top:362px;width:348px;height:1px;background:#bba6fa"></div>
<div class="a" style="left:657px;top:331px;width:1px;height:50px;background:#bba6fa"></div>
<div class="a" style="left:770px;top:331px;width:1px;height:50px;background:#bba6fa"></div>
<div class="a" style="left:100.92px;width:1000px;text-align:center;top:332.30px;font-family:'Liberation Sans',sans-serif;font-size:13px;line-height:13px;color:#f54a78;white-space:nowrap;letter-spacing:0.040px;">0,09 m</div>
<div class="a" style="left:213.77px;width:1000px;text-align:center;top:332.30px;font-family:'Liberation Sans',sans-serif;font-size:13px;line-height:13px;color:#fff;white-space:nowrap;letter-spacing:-0.050px;">14,14 m/s</div>
<div class="a" style="left:331.70px;width:1000px;text-align:center;top:332.30px;font-family:'Liberation Sans',sans-serif;font-size:13px;line-height:13px;color:#fff;white-space:nowrap;">50,89 Km/h</div>
<div class="a" style="left:100.92px;width:1000px;text-align:center;top:348.50px;font-family:'Liberation Sans',sans-serif;font-size:13px;line-height:13px;color:#f54a78;white-space:nowrap;letter-spacing:0.040px;">0,15 m</div>
<div class="a" style="left:213.77px;width:1000px;text-align:center;top:348.50px;font-family:'Liberation Sans',sans-serif;font-size:13px;line-height:13px;color:#fff;white-space:nowrap;letter-spacing:-0.050px;">23,56 m/s</div>
<div class="a" style="left:331.70px;width:1000px;text-align:center;top:348.50px;font-family:'Liberation Sans',sans-serif;font-size:13px;line-height:13px;color:#fff;white-space:nowrap;">84,82 Km/h</div>
<div class="a" style="left:100.92px;width:1000px;text-align:center;top:365.50px;font-family:'Liberation Sans',sans-serif;font-size:13px;line-height:13px;color:#f54a78;white-space:nowrap;letter-spacing:0.040px;">0,12 m</div>
<div class="a" style="left:213.77px;width:1000px;text-align:center;top:365.50px;font-family:'Liberation Sans',sans-serif;font-size:13px;line-height:13px;color:#fff;white-space:nowrap;letter-spacing:-0.050px;">18,85 m/s</div>
<div class="a" style="left:331.70px;width:1000px;text-align:center;top:365.50px;font-family:'Liberation Sans',sans-serif;font-size:13px;line-height:13px;color:#fff;white-space:nowrap;">67,86 Km/h</div>
<div class="a" style="left:146.00px;top:366.60px;font-family:'Liberation Sans',sans-serif;font-size:13px;line-height:13px;color:#000;white-space:nowrap;letter-spacing:-0.100px;">Velocidade</div>
<div class="a" style="left:213.90px;top:366.60px;font-family:'Liberation Sans',sans-serif;font-size:13px;line-height:13px;color:#000;white-space:nowrap;font-weight:bold;letter-spacing:0.267px;">tangencial</div>
<div class="a" style="left:285.90px;top:366.60px;font-family:'Liberation Sans',sans-serif;font-size:13px;line-height:13px;color:#000;white-space:nowrap;letter-spacing:-0.175px;">ser menos que</div>
<div class="a" style="left:375.10px;top:366.60px;font-family:'Liberation Sans',sans-serif;font-size:13px;line-height:13px;color:#000;white-space:nowrap;">&lt;</div>
<div class="a" style="left:387.60px;top:364.26px;font-family:'Liberation Sans',sans-serif;font-size:16px;line-height:16px;color:#000;white-space:nowrap;letter-spacing:-0.700px;">26m/s</div>
<div class="a" style="left:-417.61px;width:1000px;text-align:center;top:405.72px;font-family:'Liberation Sans',sans-serif;font-size:19px;line-height:19px;color:#000;white-space:nowrap;font-weight:bold;letter-spacing:-0.317px;">CALCULO</div>
<div class="a" style="left:-336.98px;width:1000px;text-align:center;top:405.72px;font-family:'Liberation Sans',sans-serif;font-size:19px;line-height:19px;color:#000;white-space:nowrap;font-weight:bold;letter-spacing:0.250px;">FEITO</div>
<div class="a" style="left:-268.24px;width:1000px;text-align:center;top:405.72px;font-family:'Liberation Sans',sans-serif;font-size:19px;line-height:19px;color:#000;white-space:nowrap;font-weight:bold;letter-spacing:-0.375px;">MASSA</div>
<div class="a" style="left:-208.67px;width:1000px;text-align:center;top:405.72px;font-family:'Liberation Sans',sans-serif;font-size:19px;line-height:19px;color:#000;white-space:nowrap;font-weight:bold;letter-spacing:-0.333px;">toda</div>
<div class="a" style="left:-171.20px;width:1000px;text-align:center;top:405.72px;font-family:'Liberation Sans',sans-serif;font-size:19px;line-height:19px;color:#000;white-space:nowrap;font-weight:bold;letter-spacing:-0.700px;">no</div>
<div class="a" style="left:-121.72px;width:1000px;text-align:center;top:405.72px;font-family:'Liberation Sans',sans-serif;font-size:19px;line-height:19px;color:#000;white-space:nowrap;font-weight:bold;letter-spacing:0.160px;">LIMITE</div>
<div class="a" style="left:-72.20px;width:1000px;text-align:center;top:405.72px;font-family:'Liberation Sans',sans-serif;font-size:19px;line-height:19px;color:#000;white-space:nowrap;font-weight:bold;letter-spacing:-0.600px;">do</div>
<div class="a" style="left:-37.23px;width:1000px;text-align:center;top:405.72px;font-family:'Liberation Sans',sans-serif;font-size:19px;line-height:19px;color:#000;white-space:nowrap;font-weight:bold;letter-spacing:-0.167px;">raio</div>
<div class="a" style="left:35px;top:426px;width:511px;height:1px;background:#000"></div>
<div class="a" style="left:144px;top:426px;width:129px;height:1px;background:#000"></div>
<div class="a" style="left:144px;top:517px;width:129px;height:1px;background:#000"></div>
<div class="a" style="left:144px;top:426px;width:1px;height:92px;background:#000"></div>
<div class="a" style="left:272px;top:426px;width:1px;height:92px;background:#000"></div>
<div class="a" style="left:272px;top:426px;width:132px;height:1px;background:#000"></div>
<div class="a" style="left:272px;top:517px;width:132px;height:1px;background:#000"></div>
<div class="a" style="left:272px;top:426px;width:1px;height:92px;background:#000"></div>
<div class="a" style="left:403px;top:426px;width:1px;height:92px;background:#000"></div>
<div class="a" style="left:403px;top:426px;width:143px;height:1px;background:#000"></div>
<div class="a" style="left:403px;top:517px;width:143px;height:1px;background:#000"></div>
<div class="a" style="left:403px;top:426px;width:1px;height:92px;background:#000"></div>
<div class="a" style="left:545px;top:426px;width:1px;height:92px;background:#000"></div>
<div class="a" style="left:144px;top:426px;width:1px;height:115px;background:#000"></div>
<div class="a" style="left:-411.07px;width:1000px;text-align:center;top:457.80px;font-family:'Liberation Sans',sans-serif;font-size:13px;line-height:13px;color:#000;white-space:nowrap;letter-spacing:-0.142px;">Massa da roda</div>
<div class="a" style="left:-410.77px;width:1000px;text-align:center;top:474.30px;font-family:'Liberation Sans',sans-serif;font-size:13px;line-height:13px;color:#000;white-space:nowrap;letter-spacing:0.067px;">[Kg]</div>
<div class="a" style="left:-291.43px;width:1000px;text-align:center;top:434.60px;font-family:'Liberation Sans',sans-serif;font-size:13px;line-height:13px;color:#000;white-space:nowrap;letter-spacing:-0.067px;">Energia cinética</div>
<div class="a" style="left:-291.39px;width:1000px;text-align:center;top:450.50px;font-family:'Liberation Sans',sans-serif;font-size:13px;line-height:13px;color:#000;white-space:nowrap;font-weight:bold;letter-spacing:0.025px;">acumulada</div>
<div class="a" style="left:-292.07px;width:1000px;text-align:center;top:467.50px;font-family:'Liberation Sans',sans-serif;font-size:13px;line-height:13px;color:#000;white-space:nowrap;letter-spacing:-0.143px;">[ E=(m*v^2)/2 ]</div>
<div class="a" style="left:-292.23px;width:1000px;text-align:center;top:488.40px;font-family:'Liberation Sans',sans-serif;font-size:13px;line-height:13px;color:#000;white-space:nowrap;letter-spacing:-0.257px;">Joule ou</div>
<div class="a" style="left:145px;top:488px;width:127px;height:29px;overflow:hidden">
<div class="a" style="left:-436.40px;width:1000px;text-align:center;top:16.50px;font-family:'Liberation Sans',sans-serif;font-size:13px;line-height:13px;color:#000;white-space:nowrap;">[Kg.m^2/s~2]</div>
</div>
<div class="a" style="left:-162.06px;width:1000px;text-align:center;top:441.40px;font-family:'Liberation Sans',sans-serif;font-size:13px;line-height:13px;color:#000;white-space:nowrap;letter-spacing:-0.119px;">Tempo de descarga</div>
<div class="a" style="left:-162.05px;width:1000px;text-align:center;top:457.30px;font-family:'Liberation Sans',sans-serif;font-size:13px;line-height:13px;color:#000;white-space:nowrap;letter-spacing:-0.100px;">em segundos da</div>
<div class="a" style="left:-162.68px;width:1000px;text-align:center;top:473.00px;font-family:'Liberation Sans',sans-serif;font-size:13px;line-height:13px;color:#000;white-space:nowrap;letter-spacing:-0.169px;">energia acumulada</div>
<div class="a" style="left:-162.32px;width:1000px;text-align:center;top:490.70px;font-family:'Liberation Sans',sans-serif;font-size:13px;line-height:13px;color:#000;white-space:nowrap;letter-spacing:-0.050px;">[s]</div>
<div class="a" style="left:-25.43px;width:1000px;text-align:center;top:434.60px;font-family:'Liberation Sans',sans-serif;font-size:13px;line-height:13px;color:#000;white-space:nowrap;letter-spacing:-0.059px;">Potencia da roda é</div>
<div class="a" style="left:-25.59px;width:1000px;text-align:center;top:450.30px;font-family:'Liberation Sans',sans-serif;font-size:13px;line-height:13px;color:#000;white-space:nowrap;letter-spacing:-0.175px;">Desacumular a energia</div>
<div class="a" style="left:-25.36px;width:1000px;text-align:center;top:466.70px;font-family:'Liberation Sans',sans-serif;font-size:13px;line-height:13px;color:#000;white-space:nowrap;letter-spacing:-0.111px;">por tempo(segundos)</div>
<div class="a" style="left:-26.00px;width:1000px;text-align:center;top:488.20px;font-family:'Liberation Sans',sans-serif;font-size:13px;line-height:13px;color:#000;white-space:nowrap;white-space:pre;">watt  ou [J/s].</div>
<div class="a" style="left:404px;top:488px;width:141px;height:29px;overflow:hidden">
<div class="a" style="left:-429.48px;width:1000px;text-align:center;top:15.90px;font-family:'Liberation Sans',sans-serif;font-size:13px;line-height:13px;color:#000;white-space:nowrap;letter-spacing:-0.153px;">unid.internacional</div>
</div>
<svg style="left:269px;top:499px" width="4" height="6"><path d="M0 0L3 3L0 6Z" fill="#000"/></svg>
<svg style="left:542px;top:499px" width="4" height="6"><path d="M0 0L3 3L0 6Z" fill="#000"/></svg>
<div class="a" style="left:35px;top:518px;width:510px;height:23px;background:#3402b2"></div>
<div class="a" style="left:35px;top:517px;width:511px;height:1px;background:#000"></div>
<div class="a" style="left:144px;top:518px;width:1px;height:23px;background:#bba6fa"></div>
<div class="a" style="left:272px;top:518px;width:1px;height:23px;background:#bba6fa"></div>
<div class="a" style="left:403px;top:518px;width:1px;height:23px;background:#bba6fa"></div>
<div class="a" style="left:-410.56px;width:1000px;text-align:center;top:524.20px;font-family:'Liberation Sans',sans-serif;font-size:13px;line-height:13px;color:#f54a78;white-space:nowrap;letter-spacing:-0.125px;">120,00 Kg</div>
<div class="a" style="left:-292.47px;width:1000px;text-align:center;top:524.20px;font-family:'Liberation Sans',sans-serif;font-size:13px;line-height:13px;color:#fff;white-space:nowrap;letter-spacing:-0.330px;">191853,79 J</div>
<div class="a" style="left:-163.34px;width:1000px;text-align:center;top:523.60px;font-family:'Liberation Sans',sans-serif;font-size:13px;line-height:13px;color:#f54a78;white-space:nowrap;letter-spacing:-0.083px;">90,00 s</div>
<div class="a" style="left:-25.27px;width:1000px;text-align:center;top:521.12px;font-family:'Liberation Sans',sans-serif;font-size:19px;line-height:19px;color:#30b030;white-space:nowrap;font-weight:bold;letter-spacing:0.060px;">2132 w(j/s)</div>
<div class="a" style="left:-417.93px;width:1000px;text-align:center;top:544.72px;font-family:'Liberation Sans',sans-serif;font-size:19px;line-height:19px;color:#000;white-space:nowrap;font-weight:bold;letter-spacing:-0.350px;">CALCULO</div>
<div class="a" style="left:-337.62px;width:1000px;text-align:center;top:544.72px;font-family:'Liberation Sans',sans-serif;font-size:19px;line-height:19px;color:#000;white-space:nowrap;font-weight:bold;letter-spacing:-0.250px;">FEITO</div>
<div class="a" style="left:-280.10px;width:1000px;text-align:center;top:544.72px;font-family:'Liberation Sans',sans-serif;font-size:19px;line-height:19px;color:#000;white-space:nowrap;font-weight:bold;letter-spacing:-0.200px;">COM</div>
<div class="a" style="left:-200.31px;width:1000px;text-align:center;top:544.72px;font-family:'Liberation Sans',sans-serif;font-size:19px;line-height:19px;color:#000;white-space:nowrap;font-weight:bold;letter-spacing:0.283px;">MOMENTO</div>
<div class="a" style="left:-130.80px;width:1000px;text-align:center;top:544.72px;font-family:'Liberation Sans',sans-serif;font-size:19px;line-height:19px;color:#000;white-space:nowrap;font-weight:bold;letter-spacing:-0.500px;">DE</div>
<div class="a" style="left:-74.58px;width:1000px;text-align:center;top:544.72px;font-family:'Liberation Sans',sans-serif;font-size:19px;line-height:19px;color:#000;white-space:nowrap;font-weight:bold;letter-spacing:-0.767px;">INERCIA</div>
<div class="a" style="left:18.63px;width:1000px;text-align:center;top:544.72px;font-family:'Liberation Sans',sans-serif;font-size:19px;line-height:19px;color:#000;white-space:nowrap;font-weight:bold;letter-spacing:-0.030px;">distribuido</div>
<div class="a" style="left:35px;top:565px;width:238px;height:1px;background:#000"></div>
<div class="a" style="left:144px;top:565px;width:129px;height:1px;background:#000"></div>
<div class="a" style="left:144px;top:676px;width:129px;height:1px;background:#000"></div>
<div class="a" style="left:144px;top:565px;width:1px;height:112px;background:#000"></div>
<div class="a" style="left:272px;top:565px;width:1px;height:112px;background:#000"></div>
<div class="a" style="left:403px;top:565px;width:143px;height:1px;background:#000"></div>
<div class="a" style="left:403px;top:652px;width:143px;height:1px;background:#000"></div>
<div class="a" style="left:403px;top:565px;width:1px;height:88px;background:#000"></div>
<div class="a" style="left:545px;top:565px;width:1px;height:88px;background:#000"></div>
<div class="a" style="left:35px;top:652px;width:109px;height:1px;background:#000"></div>
<div class="a" style="left:35px;top:676px;width:109px;height:1px;background:#000"></div>
<div class="a" style="left:-410.17px;width:1000px;text-align:center;top:578.70px;font-family:'Liberation Sans',sans-serif;font-size:13px;line-height:13px;color:#000;white-space:nowrap;letter-spacing:-0.133px;">Momento de</div>
<div class="a" style="left:-410.62px;width:1000px;text-align:center;top:594.60px;font-family:'Liberation Sans',sans-serif;font-size:13px;line-height:13px;color:#000;white-space:nowrap;letter-spacing:-0.050px;">inercia (cilindro</div>
<div class="a" style="left:-410.21px;width:1000px;text-align:center;top:610.90px;font-family:'Liberation Sans',sans-serif;font-size:13px;line-height:13px;color:#000;white-space:nowrap;letter-spacing:-0.028px;">solido distribuido)</div>
<div class="a" style="left:-410.87px;width:1000px;text-align:center;top:626.80px;font-family:'Liberation Sans',sans-serif;font-size:13px;line-height:13px;color:#000;white-space:nowrap;letter-spacing:-0.340px;">I=(m*r^2)/2</div>
<div class="a" style="left:-291.43px;width:1000px;text-align:center;top:586.40px;font-family:'Liberation Sans',sans-serif;font-size:13px;line-height:13px;color:#000;white-space:nowrap;letter-spacing:-0.067px;">Energia cinética</div>
<div class="a" style="left:-291.39px;width:1000px;text-align:center;top:602.50px;font-family:'Liberation Sans',sans-serif;font-size:13px;line-height:13px;color:#000;white-space:nowrap;font-weight:bold;letter-spacing:0.025px;">acumulada</div>
<div class="a" style="left:-291.62px;width:1000px;text-align:center;top:618.90px;font-family:'Liberation Sans',sans-serif;font-size:13px;line-height:13px;color:#000;white-space:nowrap;letter-spacing:-0.233px;">[ Ek=(I*ω^2)/2 ]</div>
<div class="a" style="left:-25.73px;width:1000px;text-align:center;top:569.20px;font-family:'Liberation Sans',sans-serif;font-size:13px;line-height:13px;color:#000;white-space:nowrap;letter-spacing:-0.059px;">Potencia da roda é</div>
<div class="a" style="left:-25.75px;width:1000px;text-align:center;top:586.00px;font-family:'Liberation Sans',sans-serif;font-size:13px;line-height:13px;color:#000;white-space:nowrap;letter-spacing:-0.100px;">Desacumular a energia</div>
<div class="a" style="left:-25.76px;width:1000px;text-align:center;top:602.10px;font-family:'Liberation Sans',sans-serif;font-size:13px;line-height:13px;color:#000;white-space:nowrap;letter-spacing:-0.111px;">por tempo(segundos)</div>
<div class="a" style="left:-26.00px;width:1000px;text-align:center;top:618.20px;font-family:'Liberation Sans',sans-serif;font-size:13px;line-height:13px;color:#000;white-space:nowrap;white-space:pre;">watt  ou [J/s].</div>
<div class="a" style="left:-25.78px;width:1000px;text-align:center;top:634.30px;font-family:'Liberation Sans',sans-serif;font-size:13px;line-height:13px;color:#000;white-space:nowrap;letter-spacing:-0.153px;">unid.internacional</div>
<div class="a" style="left:100.85px;width:1000px;text-align:center;top:586.00px;font-family:'Liberation Sans',sans-serif;font-size:13px;line-height:13px;color:#000;white-space:nowrap;letter-spacing:-0.108px;">Dá ~50% porque</div>
<div class="a" style="left:101.00px;width:1000px;text-align:center;top:602.10px;font-family:'Liberation Sans',sans-serif;font-size:13px;line-height:13px;color:#000;white-space:nowrap;">tem carga/massa</div>
<div class="a" style="left:100.87px;width:1000px;text-align:center;top:618.20px;font-family:'Liberation Sans',sans-serif;font-size:13px;line-height:13px;color:#000;white-space:nowrap;letter-spacing:-0.270px;">distribuida</div>
<div class="a" style="left:35px;top:653px;width:109px;height:23px;background:#ff99ff"></div>
<div class="a" style="left:145px;top:653px;width:127px;height:23px;background:#3402b2"></div>
<div class="a" style="left:404px;top:653px;width:141px;height:23px;background:#3402b2"></div>
<div class="a" style="left:-410.58px;width:1000px;text-align:center;top:658.90px;font-family:'Liberation Sans',sans-serif;font-size:13px;line-height:13px;color:#993366;white-space:nowrap;letter-spacing:-0.167px;">1,94 Kg.m2</div>
<div class="a" style="left:-291.67px;width:1000px;text-align:center;top:658.60px;font-family:'Liberation Sans',sans-serif;font-size:13px;line-height:13px;color:#fff;white-space:nowrap;letter-spacing:-0.133px;">95926,90 J</div>
<div class="a" style="left:-25.26px;width:1000px;text-align:center;top:655.62px;font-family:'Liberation Sans',sans-serif;font-size:19px;line-height:19px;color:#30b030;white-space:nowrap;font-weight:bold;letter-spacing:-0.120px;">1066 w(j/s)</div>
<div class="a" style="right:490.92px;text-align:right;top:654.72px;font-family:'Liberation Sans',sans-serif;font-size:19px;line-height:19px;color:#000;white-space:nowrap;font-style:italic;letter-spacing:-0.120px;-webkit-text-stroke:0.3px;">50,00%</div>
<div class="a" style="left:2px;top:201px;width:33px;height:1px;background:#0a5a94"></div>
<div class="a" style="left:2px;top:202px;width:33px;height:59px;background:linear-gradient(90deg,#5aaae8 0,#5aaae8 15px,#0078d7 15px);color:#fff;font-weight:bold;font-size:12px;display:flex;align-items:center;justify-content:center">4</div>
<div class="a" style="left:2px;top:111px;width:32px;height:17px;background:linear-gradient(#f6f6f6,#ececec);border-top:1px solid #fff;border-left:1px solid #fff"></div>
</body></html>
